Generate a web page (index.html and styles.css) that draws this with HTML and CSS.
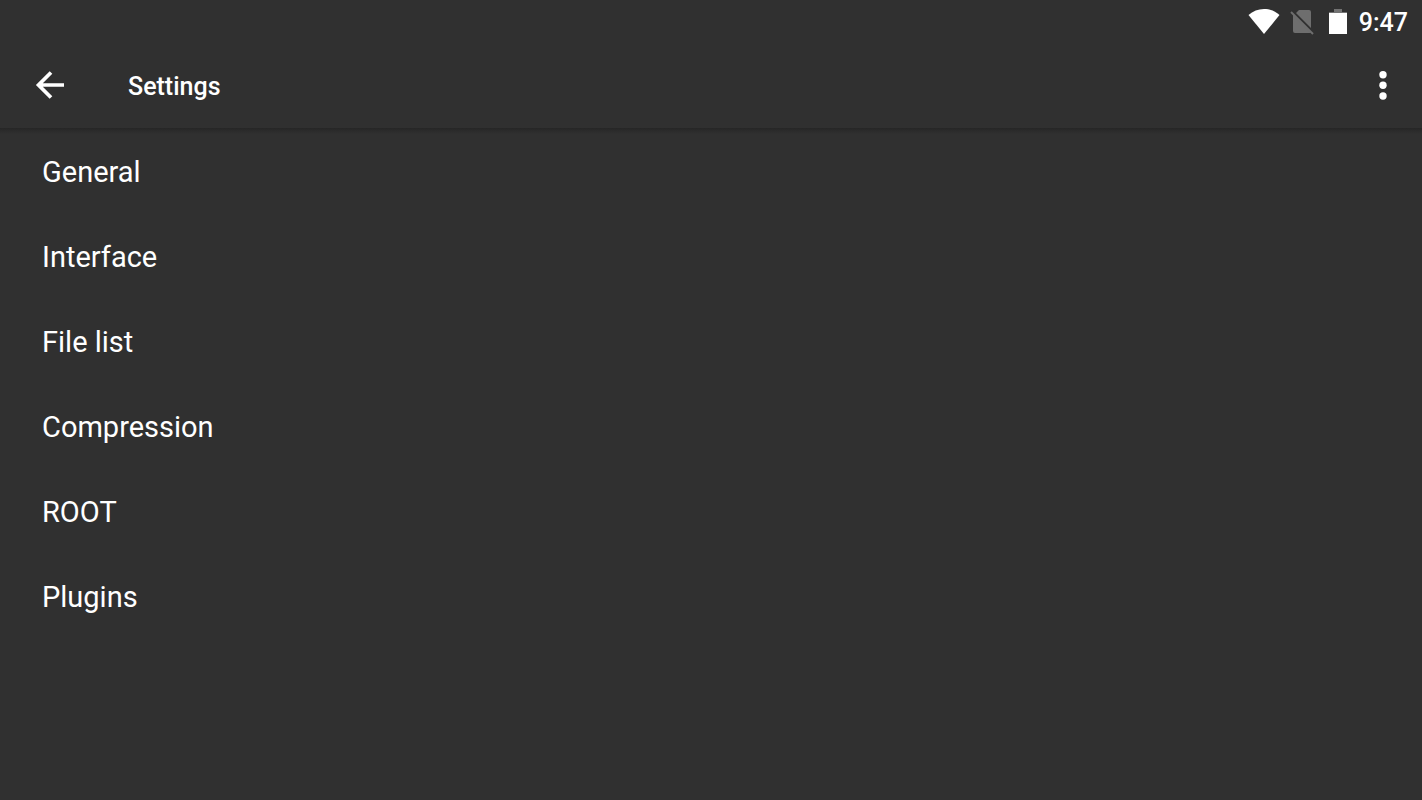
FILE: index.html
```html
<!DOCTYPE html>
<html lang="en">
<head>
<meta charset="utf-8">
<meta name="viewport" content="width=device-width, initial-scale=1">
<title>Settings</title>
<link rel="stylesheet" href="styles.css">
</head>
<body>
<div class="status-bar">
  <svg class="wifi" viewBox="0 0 32 26" aria-hidden="true"><path d="M0.500 6C5 2 10 0 16 0S27 2 31.500 6L16 25Z" fill="#fff"/></svg>
  <svg class="sim" viewBox="0 0 24 26" aria-hidden="true"><path d="M9 1H19Q21 1 21 3V19L6 4ZM3 5L21 23L20 24H5Q3 24 3 22Z" fill="#6e6e6e"/><path d="M1 3L23 25" stroke="#6e6e6e" stroke-width="2"/></svg>
  <svg class="battery" viewBox="0 0 18 26" aria-hidden="true"><path d="M5 0H13V3H18V4H0V3H5Z" fill="#737373"/><path d="M0 4H18V25H0Z" fill="#fff"/></svg>
  <time class="clock">9:47</time>
</div>
<header class="app-bar">
  <button class="icon-button" type="button" aria-label="Back"><svg class="back" viewBox="0 0 30 30" aria-hidden="true"><path d="M29 14H4M16 1.500L3.500 14L16 26.500" fill="none" stroke="#fff" stroke-width="3.700"/></svg></button>
  <h1 class="title">Settings</h1>
  <button class="icon-button" type="button" aria-label="More options"><svg class="more" viewBox="0 0 8 30" aria-hidden="true"><g fill="#fff"><circle cx="4" cy="3.700" r="3.700"/><circle cx="4" cy="14.300" r="3.700"/><circle cx="4" cy="25" r="3.700"/></g></svg></button>
</header>
<main>
  <ul class="list">
    <li><button class="item" type="button">General</button></li>
    <li><button class="item" type="button">Interface</button></li>
    <li><button class="item" type="button">File list</button></li>
    <li><button class="item" type="button">Compression</button></li>
    <li><button class="item" type="button">ROOT</button></li>
    <li><button class="item" type="button">Plugins</button></li>
  </ul>
</main>
</body>
</html>
```
FILE: styles.css
```css
* { box-sizing: border-box; }
body { margin: 0; min-height: 100vh; background: #303030; color: #fff; font-family: Roboto, sans-serif; }
.status-bar { display: flex; align-items: center; justify-content: flex-end; height: 43px; padding: 0 14px; }
.wifi { width: 32px; height: 26px; margin-right: 10px; }
.sim { width: 24px; height: 26px; margin-right: 15px; }
.battery { width: 18px; height: 26px; margin-right: 12px; }
.clock { padding-top: 2px; font-size: 25px; font-weight: 500; line-height: 32px; }
.app-bar { display: flex; align-items: center; height: 85px; padding: 0 9px 0 20px; }
.icon-button { display: flex; align-items: center; justify-content: center; width: 60px; height: 60px; padding: 0; border: 0; background: none; cursor: pointer; }
.back { width: 30px; height: 30px; }
.more { width: 8px; height: 30px; }
.title { flex: 1; margin: 0; padding: 2px 0 0 48px; font-size: 25px; font-weight: 500; line-height: 32px; }
.list { margin: 0; padding: 2px 0 0; list-style: none; background: linear-gradient(#262626, #303030) no-repeat top / 100% 6px; }
.item { display: block; width: 100%; padding: 26px 42px; border: 0; background: none; color: inherit; font: 29px/33px Roboto, sans-serif; text-align: left; cursor: pointer; }
```
